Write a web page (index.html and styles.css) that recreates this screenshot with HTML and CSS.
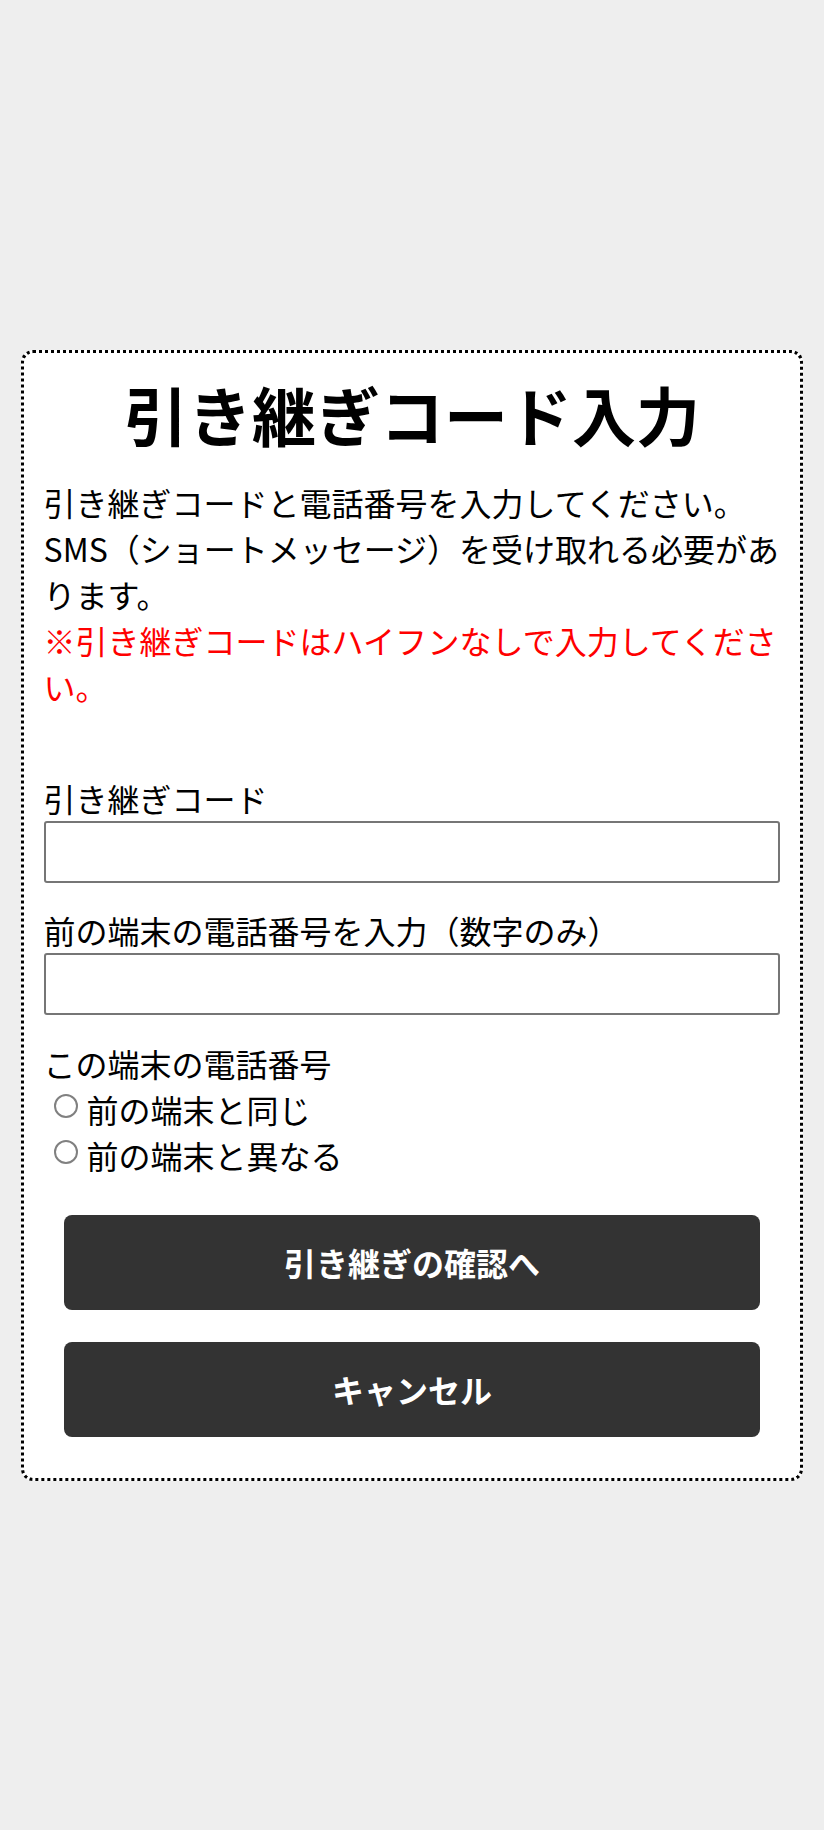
FILE: index.html
```html
<!DOCTYPE html>
<html lang="ja">
<head>
    <meta charset="UTF-8">
    <meta name="viewport" content="width=device-width, initial-scale=1.0">
    <title>引き継ぎコード入力</title>
    <link rel="stylesheet" href="styles.css">
</head>
<body>
    <div class="card">
        <!-- Title -->
        <h1 class="title">引き継ぎコード入力</h1>

        <!-- Description -->
        <p class="lead">
            引き継ぎコードと電話番号を入力してください。<br>SMS（ショートメッセージ）を受け取れる必要があります。<br>
            <span class="warn">※引き継ぎコードはハイフンなしで入力してください。</span>
        </p>

        <!-- Form -->
        <div class="field">
            <label class="label" for="code">引き継ぎコード</label>
            <input class="input" type="text" id="code">
        </div>
        <div class="field">
            <label class="label" for="tel">前の端末の電話番号を入力（数字のみ）</label>
            <input class="input" type="tel" id="tel">
        </div>
        <div class="field radios">
            <div class="label">この端末の電話番号</div>
            <label class="radio"><input type="radio" name="same" value="1">前の端末と同じ</label>
            <label class="radio"><input type="radio" name="same" value="0">前の端末と異なる</label>
        </div>

        <!-- Buttons -->
        <div class="actions">
            <button class="button">引き継ぎの確認へ</button>
            <button class="button">キャンセル</button>
        </div>
    </div>
</body>
</html>
```

FILE: styles.css
```css
/* General Styles */
body {
    font-family: "Noto Sans CJK JP", sans-serif;
    background-color: #eee;
    color: #000;
    margin: 0;
    min-height: 100vh;
    display: flex;
    align-items: center;
    justify-content: center;
}

.card {
    width: 95%;
    box-sizing: border-box;
    background-color: #fff;
    border: 3px dotted #000;
    border-radius: 12px;
    padding: 14px 20px 41px;
}

.title {
    font-size: 64px;
    font-weight: bold;
    text-align: center;
    margin: 0 0 20px;
}

.lead {
    font-size: 32px;
    margin: 0 0 66px;
}

.warn {
    color: #ff0000;
}

.field {
    margin-bottom: 24px;
}

.label {
    display: block;
    font-size: 32px;
}

.input {
    display: block;
    width: 100%;
    height: 62px;
    box-sizing: border-box;
    font-size: 32px;
    font-family: inherit;
    border: 2px solid #767676;
    border-radius: 3px;
}

.radios {
    margin-top: 25px;
}

.radio {
    display: flex;
    align-items: center;
    font-size: 32px;
}

.radio input {
    appearance: none;
    -webkit-appearance: none;
    flex: none;
    box-sizing: border-box;
    width: 24px;
    height: 24px;
    border: 2px solid #808080;
    border-radius: 50%;
    background-color: #fff;
    margin: 0 9px 5px 10px;
}

.actions {
    display: flex;
    flex-direction: column;
    gap: 32px;
    margin-top: 37px;
    padding: 0 20px;
}

.button {
    width: 100%;
    height: 95px;
    background-color: #333;
    color: #fff;
    font-family: inherit;
    font-size: 32px;
    font-weight: bold;
    border: none;
    border-radius: 8px;
    cursor: pointer;
}
```
